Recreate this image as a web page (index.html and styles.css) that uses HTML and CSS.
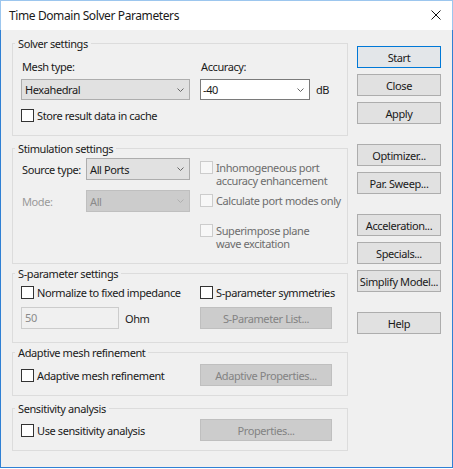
FILE: index.html
```html
<!DOCTYPE html>
<html>
<head>
<meta charset="utf-8">
<link rel="stylesheet" href="styles.css">
</head>
<body>
<div class="window">
  <div class="titlebar">
    <span class="title">Time Domain Solver Parameters</span>
    <svg class="close" width="10" height="10" viewBox="0 0 10 10"><path d="M0.5 0.5 L9.5 9.5 M9.5 0.5 L0.5 9.5" stroke="#111" stroke-width="1" fill="none"/></svg>
  </div>
  <div class="body">
    <div class="groups">
      <section class="group g1">
        <div class="gtitle">Solver settings</div>
        <div class="gin">
          <div class="two-col">
            <div class="col">
              <div class="lbl">Mesh type:</div>
              <div class="combo mesh"><span>Hexahedral</span><svg class="chev" width="7" height="4" viewBox="0 0 7 4"><polyline points="0.5,0.5 3.5,3.5 6.5,0.5" fill="none" stroke="#666" stroke-width="1"/></svg></div>
            </div>
            <div class="col">
              <div class="lbl">Accuracy:</div>
              <div class="acc-row">
                <div class="combo white acc"><span>-40</span><svg class="chev" width="7" height="4" viewBox="0 0 7 4"><polyline points="0.5,0.5 3.5,3.5 6.5,0.5" fill="none" stroke="#666" stroke-width="1"/></svg></div>
                <span class="unit">dB</span>
              </div>
            </div>
          </div>
          <label class="check store"><span class="box"></span><span>Store result data in cache</span></label>
        </div>
      </section>

      <section class="group g2">
        <div class="gtitle">Stimulation settings</div>
        <div class="gin stim">
          <div class="stim-left">
            <div class="field-row">
              <span class="lbl src">Source type:</span>
              <div class="combo src-combo"><span>All Ports</span><svg class="chev" width="7" height="4" viewBox="0 0 7 4"><polyline points="0.5,0.5 3.5,3.5 6.5,0.5" fill="none" stroke="#666" stroke-width="1"/></svg></div>
            </div>
            <div class="field-row mode-row">
              <span class="lbl src disabled-light">Mode:</span>
              <div class="combo src-combo disabled"><span>All</span><svg class="chev" width="7" height="4" viewBox="0 0 7 4"><polyline points="0.5,0.5 3.5,3.5 6.5,0.5" fill="none" stroke="#b0b0b0" stroke-width="1"/></svg></div>
            </div>
          </div>
          <div class="stim-right">
            <label class="check multi dis"><span class="box"></span><span class="lines"><span>Inhomogeneous port</span><span>accuracy enhancement</span></span></label>
            <label class="check multi dis item2"><span class="box"></span><span>Calculate port modes only</span></label>
            <label class="check multi dis item3"><span class="box"></span><span class="lines"><span>Superimpose plane</span><span>wave excitation</span></span></label>
          </div>
        </div>
      </section>

      <section class="group g3">
        <div class="gtitle">S-parameter settings</div>
        <div class="gin">
          <div class="grid-row">
            <label class="check"><span class="box"></span><span>Normalize to fixed impedance</span></label>
            <label class="check"><span class="box"></span><span>S-parameter symmetries</span></label>
          </div>
          <div class="grid-row field-line">
            <div class="ohm-row">
              <div class="textbox">50</div>
              <span class="unit ohm">Ohm</span>
            </div>
            <div class="btn dis-btn wide">S-Parameter List...</div>
          </div>
        </div>
      </section>

      <section class="group g4">
        <div class="gtitle">Adaptive mesh refinement</div>
        <div class="gin">
          <div class="grid-row">
            <label class="check"><span class="box"></span><span>Adaptive mesh refinement</span></label>
            <div class="btn dis-btn wide">Adaptive Properties...</div>
          </div>
        </div>
      </section>

      <section class="group g5">
        <div class="gtitle">Sensitivity analysis</div>
        <div class="gin">
          <div class="grid-row">
            <label class="check"><span class="box"></span><span>Use sensitivity analysis</span></label>
            <div class="btn dis-btn wide">Properties...</div>
          </div>
        </div>
      </section>
    </div>

    <div class="buttons">
      <div class="btn side default">Start</div>
      <div class="btn side">Close</div>
      <div class="btn side sep">Apply</div>
      <div class="btn side">Optimizer...</div>
      <div class="btn side sep">Par. Sweep...</div>
      <div class="btn side">Acceleration...</div>
      <div class="btn side">Specials...</div>
      <div class="btn side sep">Simplify Model...</div>
      <div class="btn side">Help</div>
    </div>
  </div>
</div>
</body>
</html>
```

FILE: styles.css
```css
* { box-sizing: border-box; }
html, body { margin: 0; padding: 0; }
body {
  background: #ffffff;
  font-family: "Noto Sans", "Segoe UI", sans-serif;
  font-size: 11px;
  line-height: 13px;
  letter-spacing: -0.4px;
  color: #1a1a1a;
}
.window {
  width: 453px;
  height: 468px;
  border: 1px solid #2f80d4;
  background: #f0f0f0;
  display: flex;
  flex-direction: column;
}
.titlebar {
  height: 30px;
  flex: none;
  margin: -1px -1px 0 -1px;
  border: 1px solid #9cc6ee;
  border-bottom: none;
  background: #ffffff;
  display: flex;
  align-items: center;
  justify-content: space-between;
  padding: 0 11px 0 8px;
  font-size: 12px;
}
.close { display: block; margin-top: -1px; }
.body {
  display: flex;
  gap: 9px;
  padding: 13px 11px 0 11px;
}
.groups {
  width: 336px;
  flex: none;
  display: flex;
  flex-direction: column;
}
.group {
  border: 1px solid #dcdcdc;
}
.gtitle {
  display: table;
  margin: -7px 0 0 2px;
  padding: 0 3px;
  height: 13px;
  line-height: 13px;
  background: #f0f0f0;
}
.gin { padding: 0 8px; }

.g1 .gin { padding-top: 10px; padding-bottom: 13px; }
.g2 { margin-top: 12px; }
.g3 { margin-top: 9px; }
.g3 .gin { padding-top: 6px; padding-bottom: 13px; }
.g4 { margin-top: 9px; }
.g4 .gin { padding-top: 5px; padding-bottom: 9px; }
.g5 { margin-top: 12px; }
.g5 .gin { padding-top: 4px; padding-bottom: 9px; }

.two-col {
  display: grid;
  grid-template-columns: 169px 1fr;
  column-gap: 10px;
}
.lbl { padding-left: 1px; }
.col .lbl { margin-bottom: 6px; }
.combo {
  display: flex;
  align-items: center;
  justify-content: space-between;
  height: 22px;
  border: 1px solid #adadad;
  background: #e1e1e1;
  padding: 0 5px 0 3px;
}
.combo.mesh { height: 21px; }
.combo.white { background: #ffffff; border-color: #7a7a7a; height: 21px; padding-left: 2px; }
.combo.acc { width: 110px; }
.chev { display: block; }
.acc-row { display: flex; align-items: center; }
.unit { margin-left: 6px; }
.store { margin-top: 9px; }

.check {
  display: flex;
  align-items: center;
  gap: 3px;
  white-space: nowrap;
}
.box {
  width: 13px;
  height: 13px;
  flex: none;
  border: 1px solid #333333;
  background: #ffffff;
}
.check.multi { align-items: flex-start; }
.lines { display: flex; flex-direction: column; }
.lines > span { height: 13px; }
.check.dis { color: #6d6d6d; }
.check.dis .box { border-color: #cccccc; background: #f7f7f7; }

.stim {
  display: flex;
  gap: 10px;
  padding-top: 0;
  padding-bottom: 13px;
}
.stim-left { width: 169px; flex: none; padding-top: 3px; }
.field-row {
  display: flex;
  align-items: center;
  justify-content: space-between;
}
.mode-row { margin-top: 10px; }
.src-combo { width: 104px; }
.combo.disabled { background: #cccccc; border-color: #bfbfbf; color: #8a8a8a; }
.disabled-light { color: #9a9a9a; }
.stim-right { padding-top: 6px; }
.item2 { margin-top: 7px; }
.item3 { margin-top: 17px; }

.grid-row {
  display: grid;
  grid-template-columns: 179px 132px;
  align-items: center;
}
.field-line { margin-top: 8px; }
.ohm-row { display: flex; align-items: center; }
.textbox {
  width: 98px;
  height: 22px;
  border: 1px solid #cccccc;
  background: #f0f0f0;
  color: #8a8a8a;
  padding-left: 3px;
  line-height: 20px;
}
.ohm { margin-left: 6px; }

.btn {
  height: 22px;
  display: flex;
  align-items: center;
  justify-content: center;
  border: 1px solid #adadad;
  background: #e1e1e1;
  white-space: nowrap;
}
.dis-btn { background: #cccccc; border-color: #bfbfbf; color: #838383; }
.wide { width: 132px; }

.buttons {
  display: flex;
  flex-direction: column;
  padding-top: 3px;
}
.btn.side { width: 84px; margin-bottom: 6px; }
.btn.side.sep { margin-bottom: 20px; }
.btn.default { border-color: #0078d7; background: #e3e6e9; }
```
